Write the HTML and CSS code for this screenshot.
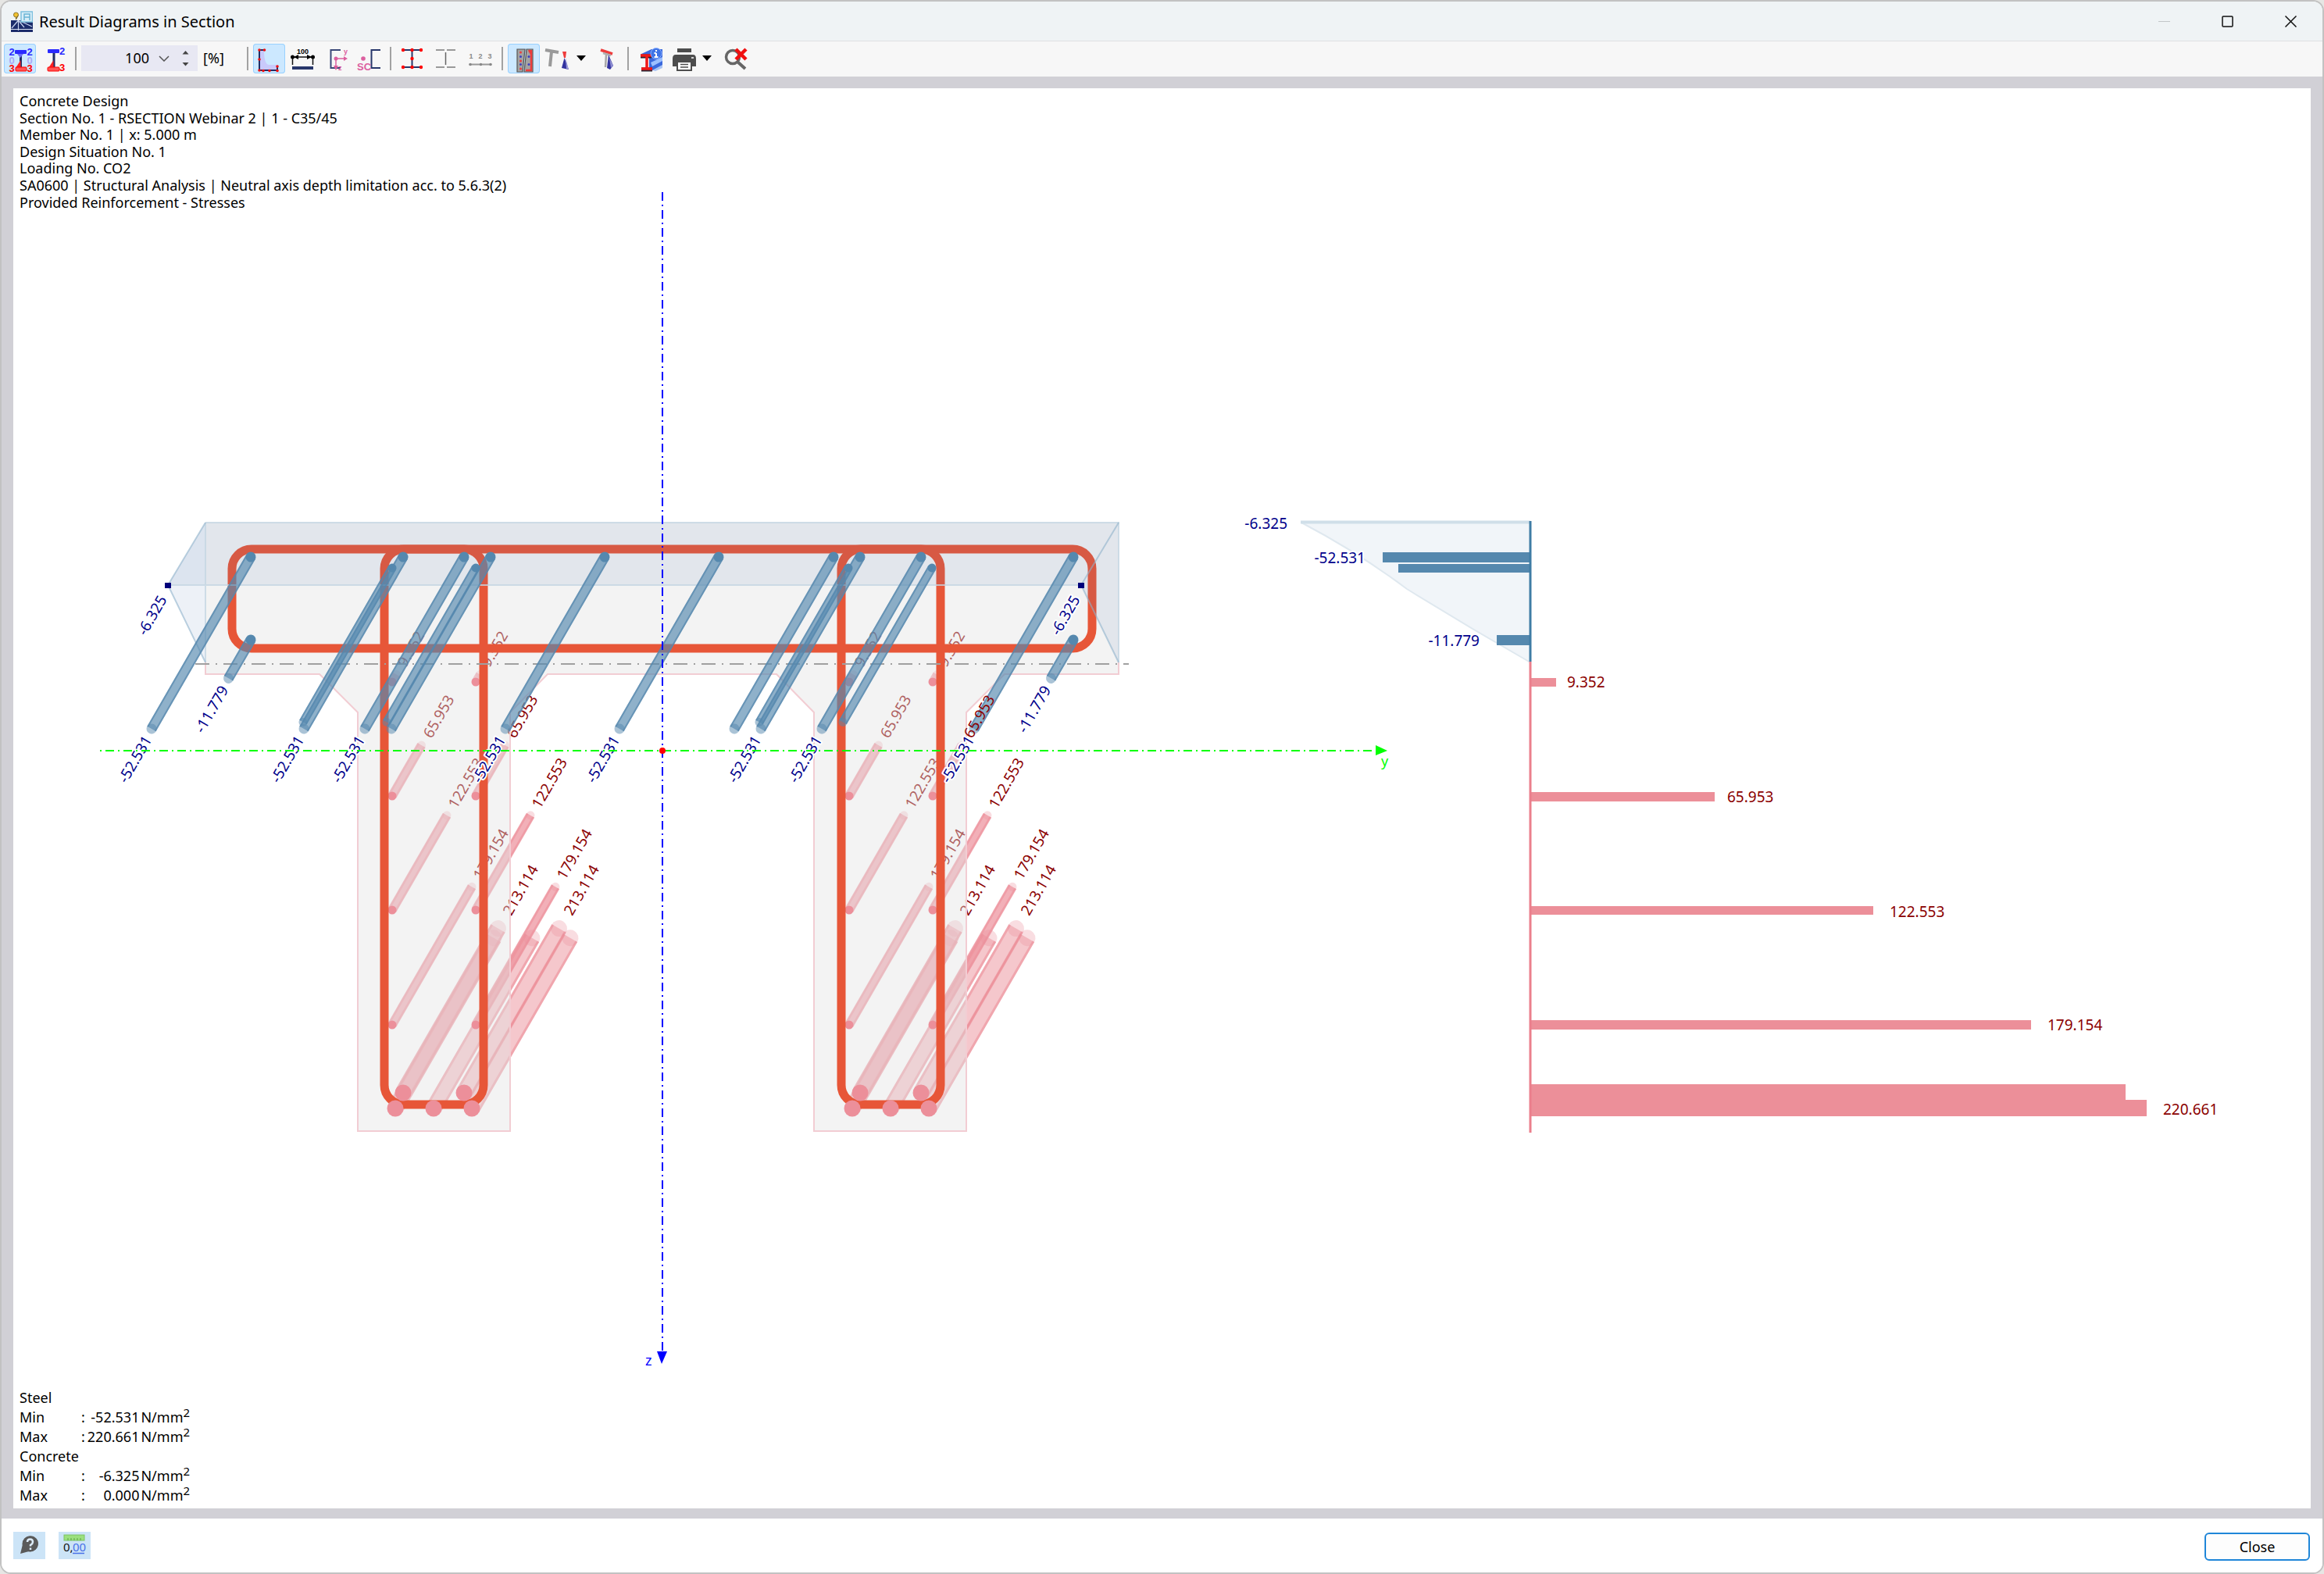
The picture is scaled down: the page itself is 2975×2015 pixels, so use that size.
FILE: index.html
```html
<!DOCTYPE html>
<html lang="en">
<head>
<meta charset="utf-8">
<title>Result Diagrams in Section</title>
<link rel="stylesheet" href="styles.css">
</head>
<body>
<div class="window">
  <header class="titlebar">
    <svg class="app-icon" viewBox="0 0 28 27" aria-hidden="true">
      <rect y="12" width="28" height="15" fill="#1b2c6b"/>
      <path d="M0 23.500H28" stroke="#dfe6f5" stroke-width="1"/>
      <path d="M9.500 12V25M9.500 12L1 22M9.500 12L17 21M12 13L27 20" stroke="#c9d5ee" stroke-width="1.200" fill="none"/>
      <rect x="13" y="1" width="14.500" height="13" fill="#d9eef8" stroke="#7cc0de" stroke-width="1.500"/>
      <path d="M17 12V4H24V12M17 8H24" stroke="#6ab4d5" stroke-width="1.500" fill="none"/>
      <circle cx="6.500" cy="5" r="3" fill="#f3c22d" stroke="#8a7430" stroke-width="1"/>
      <path d="M6.500 8V11M9 6L7 10" stroke="#8a7430" stroke-width="1.200"/>
    </svg>
    <h1 class="title">Result Diagrams in Section</h1>
    <div class="window-controls">
      <button class="ctl" type="button" aria-label="Minimize" disabled><svg viewBox="0 0 15 15"><path d="M0 7.500H15" stroke="#c3c6c8"/></svg></button>
      <button class="ctl" type="button" aria-label="Maximize"><svg viewBox="0 0 15 15"><rect x="1" y="1" width="13" height="13" rx="1" fill="none" stroke="#111" stroke-width="1.500"/></svg></button>
      <button class="ctl" type="button" aria-label="Close window"><svg viewBox="0 0 15 15"><path d="M0.500 0.500L14.500 14.500M14.500 0.500L0.500 14.500" stroke="#111" stroke-width="1.500"/></svg></button>
    </div>
  </header>

  <div class="toolbar" role="toolbar" aria-label="Diagram tools">
    <button class="tool active" type="button" aria-label="Two-sided values">
      <svg viewBox="0 0 41 38">
        <path d="M21.500 12V32" stroke="#1f2e66" stroke-width="3"/>
        <rect x="14" y="8" width="15" height="5" rx="1" fill="#2a2aff"/>
        <path d="M17 13L21 18L25 13Z" fill="#6d6df5"/>
        <path d="M15 31L21.500 21V31Z" fill="#f22"/>
        <rect x="15" y="30" width="14" height="5" rx="1" fill="#f55" stroke="#f00"/>
        <g class="ico-text" text-anchor="middle"><text x="10" y="15" fill="#2a2aff">2</text><text x="33" y="15" fill="#2a2aff">2</text><text x="10" y="26" fill="#a9a9f5">0</text><text x="33" y="26" fill="#a9a9f5">0</text><text x="10" y="36" fill="#f00">3</text><text x="33" y="36" fill="#f00">3</text></g>
      </svg>
    </button>
    <button class="tool" type="button" aria-label="One-sided values">
      <svg viewBox="0 0 41 38">
        <path d="M20 10V32" stroke="#1f2e66" stroke-width="3"/>
        <rect x="12" y="7" width="15" height="5" rx="1" fill="#2a2aff"/>
        <path d="M13 31L19.500 21V31Z" fill="#f22"/>
        <rect x="12" y="30" width="15" height="5" rx="1" fill="#f55" stroke="#f00"/>
        <g class="ico-text"><text x="27" y="14" fill="#2a2aff">2</text><text x="27" y="35" fill="#f00">3</text></g>
      </svg>
    </button>
    <span class="sep"></span>
    <div class="zoom">
      <input class="zoom-input" id="zoom" type="text" value="100" aria-describedby="zoom-unit">
      <button class="zoom-drop" type="button" aria-label="Zoom presets"><svg viewBox="0 0 14 8"><path d="M1 1L7 7L13 1" fill="none" stroke="#555" stroke-width="1.500"/></svg></button>
      <button class="zoom-step" type="button" aria-label="Step zoom"><svg viewBox="0 0 9 20"><path d="M0.500 4.500L4.500 0L8.500 4.500ZM0.500 15L4.500 19.500L8.500 15Z" fill="#444"/></svg></button>
    </div>
    <label class="unit" id="zoom-unit" for="zoom">[%]</label>
    <span class="sep"></span>
    <button class="tool active" type="button" aria-label="Section contour">
      <svg viewBox="0 0 41 38">
        <path d="M8 8H14Q14 26 20 27H32V34H8Z" fill="#c9c9fb"/>
        <path d="M8 8V34H31V28M8 8H14" fill="none" stroke="#1f2e66" stroke-width="2"/>
        <g fill="#e11"><circle cx="8" cy="8" r="1.800"/><circle cx="14.500" cy="8" r="1.800"/><circle cx="8" cy="20" r="1.800"/><circle cx="8" cy="34" r="1.800"/><circle cx="13" cy="34.500" r="1.800"/><circle cx="21" cy="34.500" r="1.800"/><circle cx="31" cy="34.500" r="1.800"/><circle cx="31" cy="29" r="1.800"/></g>
      </svg>
    </button>
    <button class="tool" type="button" aria-label="Dimensions">
      <svg viewBox="0 0 41 38">
        <rect x="6" y="29" width="27" height="4" fill="#27376b"/>
        <path d="M6.500 17V27M32.500 17V27M6.500 17H32.500" stroke="#111" stroke-width="1.500"/>
        <circle cx="6.500" cy="17" r="2.500"/><circle cx="32.500" cy="17" r="2.500"/>
        <path d="M8 17L14 14V20ZM31 17L25 14V20Z"/>
        <text class="ico-mini" x="19.500" y="13" text-anchor="middle">100</text>
      </svg>
    </button>
    <button class="tool" type="button" aria-label="Principal axes">
      <svg viewBox="0 0 41 38">
        <path d="M24 8H11.500V31H24" fill="none" stroke="#3a4878" stroke-width="2"/>
        <path d="M18 19H30M18 19V31" stroke="#dc5f9f" stroke-width="1.500"/>
        <circle cx="18" cy="19" r="2.500" fill="#dc5f9f"/><path d="M28 16L33 19L28 22ZM15 28L18 34L21 28Z" fill="#dc5f9f"/>
        <g class="ico-mini" fill="#dc5f9f"><text x="28" y="13">y</text><text x="21" y="34">z</text></g>
      </svg>
    </button>
    <button class="tool narrow" type="button" aria-label="Shear center">
      <svg viewBox="0 0 37 38">
        <path d="M31 8H19.500V31H31" fill="none" stroke="#27376b" stroke-width="2"/>
        <circle cx="9" cy="19" r="2.800" fill="#dc5f9f"/>
        <text class="ico-text" x="1" y="34" fill="#dc5f9f">SC</text>
      </svg>
    </button>
    <span class="sep"></span>
    <button class="tool" type="button" aria-label="Stress points">
      <svg viewBox="0 0 41 38">
        <path d="M9 8H33M9 30H33M20.500 8V30" stroke="#27376b" stroke-width="2"/>
        <g fill="#f00"><circle cx="9" cy="8" r="2.200"/><circle cx="20.500" cy="8" r="2.200"/><circle cx="32" cy="8" r="2.200"/><circle cx="20.500" cy="19" r="2.200"/><circle cx="9" cy="30" r="2.200"/><circle cx="20.500" cy="30" r="2.200"/><circle cx="32" cy="30" r="2.200"/></g>
      </svg>
    </button>
    <button class="tool" type="button" aria-label="Elements">
      <svg viewBox="0 0 41 38"><path d="M7 8H18M21 8H32M7 30H18M21 30H32" stroke="#999" stroke-width="1.800"/><path d="M19.500 11V27" stroke="#666" stroke-width="1.500"/></svg>
    </button>
    <button class="tool" type="button" aria-label="Numbering">
      <svg viewBox="0 0 41 38"><path d="M7 26.500H34" stroke="#999" stroke-width="1.800"/><g fill="#888"><circle cx="7" cy="26.500" r="1.800"/><circle cx="20.500" cy="26.500" r="1.800"/><circle cx="33" cy="26.500" r="1.800"/></g><g class="ico-mini" fill="#888" text-anchor="middle"><text x="8" y="19">1</text><text x="20" y="19">2</text><text x="32" y="19">3</text></g></svg>
    </button>
    <span class="sep"></span>
    <button class="tool active" type="button" aria-label="Reinforcement">
      <svg viewBox="0 0 41 38">
        <path d="M12 7H22L19 36H12ZM24 7H32V36H21Z" fill="#a3a3a3" stroke="#555" stroke-width="1.200"/>
        <path d="M30 8V34H23M27 8L30 13" fill="none" stroke="#ee3c3c" stroke-width="2.500"/>
        <g fill="#ee3c3c"><circle cx="16.500" cy="11" r="1.500"/><circle cx="16.500" cy="22" r="1.500"/><circle cx="16.500" cy="32" r="1.500"/></g>
        <g fill="#4040c0"><circle cx="16.500" cy="16.500" r="1.500"/><circle cx="16.500" cy="26.500" r="1.500"/><circle cx="27" cy="16.500" r="1.500"/><circle cx="27" cy="26.500" r="1.500"/></g>
      </svg>
    </button>
    <div class="split">
      <button class="tool" type="button" aria-label="Stress on section">
        <svg viewBox="0 0 41 38">
          <path d="M4 8L21 11M12 10L10 29" stroke="#9a9a9a" stroke-width="4" fill="none"/>
          <path d="M26 10H31L30 18H28Z" fill="#ee3c3c"/><path d="M28.500 18L25 31L34 33Z" fill="#3434a0"/><path d="M30 18L34 33L31 32Z" fill="#9b9bd8"/>
        </svg>
      </button>
      <button class="drop" type="button" aria-label="Stress options"><svg viewBox="0 0 12 7"><path d="M0 0H12L6 7Z"/></svg></button>
    </div>
    <button class="tool" type="button" aria-label="Result on section">
      <svg viewBox="0 0 41 38">
        <path d="M13 8L28 13" stroke="#ee3c3c" stroke-width="3.500"/><path d="M16 12L26 15" stroke="#b0b0b0" stroke-width="2.500"/>
        <path d="M20 14L19 30" stroke="#a8a8a8" stroke-width="2.500"/>
        <path d="M23 14L21 31L25 33L29 28Z" fill="#3434a0"/><path d="M24 18L29 28L26 31Z" fill="#8f8fd2"/>
      </svg>
    </button>
    <span class="sep"></span>
    <button class="tool" type="button" aria-label="Section details">
      <svg viewBox="0 0 41 38">
        <path d="M10 13L23 7H37V28L25 34H20V18Z" fill="#3b69dd"/><path d="M22 24L37 17V22L24 29Z" fill="#9cc0ff"/><path d="M24 34L37 27V31L28 35Z" fill="#a9c4f5"/>
        <path d="M9 16H23M10 33H24" stroke="#2b2330" stroke-width="5"/><path d="M9 15H23M17 15V32M10 32H24" stroke="#f01818" stroke-width="3.500"/>
        <circle cx="29" cy="12.500" r="7" fill="#3f74e6" stroke="#8fb2ff"/>
        <path d="M29 12V17M26.500 12H29M26.500 17H31.500M29 8V10" stroke="#fff" stroke-width="2"/>
      </svg>
    </button>
    <div class="split">
      <button class="tool" type="button" aria-label="Print">
        <svg viewBox="0 0 41 38">
          <path d="M12 6H30V11H12ZM6 19Q6 14 10 14H32Q36 14 36 19V29H31V24H11V29H6Z" fill="#4d4d4d"/>
          <rect x="12" y="23" width="18" height="11" fill="#fff" stroke="#4d4d4d" stroke-width="2"/><path d="M16 26.500H26M16 30H26" stroke="#4d4d4d" stroke-width="1.500"/><path d="M30 18H33" stroke="#fff" stroke-width="1.500"/>
        </svg>
      </button>
      <button class="drop" type="button" aria-label="Print options"><svg viewBox="0 0 12 7"><path d="M0 0H12L6 7Z"/></svg></button>
    </div>
    <button class="tool" type="button" aria-label="Reset view">
      <svg viewBox="0 0 41 38">
        <circle cx="21" cy="17" r="8.500" fill="none" stroke="#666" stroke-width="3.500"/><path d="M27 23L37 32" stroke="#666" stroke-width="4"/>
        <path d="M25 7L38 20M38 7L25 20" stroke="#f01010" stroke-width="4.500"/>
      </svg>
    </button>
  </div>

  <main class="frame">
    <div class="canvas">
      <svg class="diagram" viewBox="17 113 2941 1818" role="img" aria-label="Stress diagram of the section">
        <defs>
          <g id="b-main"><rect class="b-body" x="0" y="-6.500" width="254" height="13"/><path class="b-edge" d="M0 -5.500H254M0 5.500H254"/><circle class="b-tail" cx="254" r="6.500"/><circle class="b-head" r="6.500"/></g>
          <g id="b-small"><rect class="b-body" x="0" y="-5.500" width="228" height="11"/><path class="b-edge" d="M0 -4.500H228M0 4.500H228"/><circle class="b-tail" cx="228" r="5.500"/><circle class="b-head" r="5.500"/></g>
          <g id="b-short"><rect class="b-body" x="0" y="-6.500" width="57" height="13"/><path class="b-edge" d="M0 -5.500H57M0 5.500H57"/><circle class="b-tail" cx="57" r="6.500"/><circle class="b-head" r="6.500"/></g>
          <g id="p-9"><rect class="p-body" y="-5.500" width="11" height="11"/><circle class="p-tail" cx="11" r="5.500"/></g>
          <g id="p-66"><rect class="p-body" y="-5.500" width="75" height="11"/><path class="p-edge" d="M0 -4.500H75M0 4.500H75"/><circle class="p-tail" cx="75" r="5.500"/></g>
          <g id="p-123"><rect class="p-body" y="-5.500" width="140" height="11"/><path class="p-edge" d="M0 -4.500H140M0 4.500H140"/><circle class="p-tail" cx="140" r="5.500"/></g>
          <g id="p-179"><rect class="p-body" y="-5.500" width="204" height="11"/><path class="p-edge" d="M0 -4.500H204M0 4.500H204"/><circle class="p-tail" cx="204" r="5.500"/></g>
          <g id="p-213"><rect class="p-wide" y="-10.500" width="243" height="21"/><path class="p-edge" d="M0 -9H243M0 9H243"/><circle class="p-tail" cx="243" r="10.500"/></g>
          <g id="p-221"><rect class="p-wide" y="-10.500" width="252" height="21"/><path class="p-edge" d="M0 -9H252M0 9H252"/><circle class="p-tail" cx="252" r="10.500"/></g>
          <g id="tension">
            <use href="#p-9" transform="translate(502 873) rotate(-60)"/><use href="#p-9" transform="translate(609 873) rotate(-60)"/>
            <use href="#p-66" transform="translate(502 1019) rotate(-60)"/><use href="#p-66" transform="translate(609 1019) rotate(-60)"/>
            <use href="#p-123" transform="translate(502 1165) rotate(-60)"/><use href="#p-123" transform="translate(609 1165) rotate(-60)"/>
            <use href="#p-179" transform="translate(502 1312) rotate(-60)"/><use href="#p-179" transform="translate(609 1312) rotate(-60)"/>
            <use href="#p-213" transform="translate(516 1399) rotate(-60)"/><use href="#p-213" transform="translate(594 1399) rotate(-60)"/>
            <use href="#p-221" transform="translate(506 1419) rotate(-60)"/><use href="#p-221" transform="translate(555 1419) rotate(-60)"/><use href="#p-221" transform="translate(604 1419) rotate(-60)"/>
          </g>
          <g id="small-heads" class="p-head"><circle cx="502" cy="873" r="5.500"/><circle cx="609" cy="873" r="5.500"/><circle cx="502" cy="1019" r="5.500"/><circle cx="609" cy="1019" r="5.500"/><circle cx="502" cy="1165" r="5.500"/><circle cx="609" cy="1165" r="5.500"/><circle cx="502" cy="1312" r="5.500"/><circle cx="609" cy="1312" r="5.500"/></g>
          <g id="big-heads" class="p-head"><circle cx="516" cy="1399" r="10.500"/><circle cx="594" cy="1399" r="10.500"/><circle cx="506" cy="1419" r="10.500"/><circle cx="555" cy="1419" r="10.500"/><circle cx="604" cy="1419" r="10.500"/></g>
          <rect id="web-stirrup" class="stirrup" x="492" y="703" width="127" height="711" rx="25"/>
        </defs>

        <!-- tension bars and their values, behind the concrete -->
        <use href="#tension"/>
        <use href="#tension" x="585"/>
        <g class="label max">
          <text transform="translate(507 863) rotate(-60)" x="13" y="7">9.352</text>
          <text transform="translate(614 863) rotate(-60)" x="13" y="7">9.352</text>
          <text transform="translate(540 954) rotate(-60)" x="13" y="7">65.953</text>
          <text transform="translate(647 954) rotate(-60)" x="13" y="7">65.953</text>
          <text transform="translate(572 1044) rotate(-60)" x="13" y="7">122.553</text>
          <text transform="translate(679 1044) rotate(-60)" x="13" y="7">122.553</text>
          <text transform="translate(604 1135) rotate(-60)" x="13" y="7">179.154</text>
          <text transform="translate(711 1135) rotate(-60)" x="13" y="7">179.154</text>
          <text transform="translate(638 1188) rotate(-60)" x="21" y="7">213.114</text>
          <text transform="translate(716 1188) rotate(-60)" x="21" y="7">213.114</text>
          <text transform="translate(1092 863) rotate(-60)" x="13" y="7">9.352</text>
          <text transform="translate(1199 863) rotate(-60)" x="13" y="7">9.352</text>
          <text transform="translate(1125 954) rotate(-60)" x="13" y="7">65.953</text>
          <text transform="translate(1157 1044) rotate(-60)" x="13" y="7">122.553</text>
          <text transform="translate(1264 1044) rotate(-60)" x="13" y="7">122.553</text>
          <text transform="translate(1189 1135) rotate(-60)" x="13" y="7">179.154</text>
          <text transform="translate(1296 1135) rotate(-60)" x="13" y="7">179.154</text>
          <text transform="translate(1223 1188) rotate(-60)" x="21" y="7">213.114</text>
          <text transform="translate(1301 1188) rotate(-60)" x="21" y="7">213.114</text>
        </g>

        <!-- concrete outline -->
        <path class="concrete" d="M263 669H1432V863H1286L1237 912V1448H1042V912L994 863H701L653 912V1448H458V912L409 863H263Z"/>
        <path class="outline" d="M263 848V863H409L458 912V1448H653V912L701 863H994L1042 912V1448H1237V912L1286 863H1432V848"/>

        <use href="#small-heads"/>
        <use href="#small-heads" x="585"/>

        <rect class="stirrup" x="297" y="703" width="1101" height="127" rx="25"/>
        <use href="#web-stirrup"/>
        <use href="#web-stirrup" x="585"/>
        <use href="#big-heads"/>
        <use href="#big-heads" x="585"/>

        <!-- concrete compression -->
        <path class="wedge" d="M263 669H1432V848L1384 749H263Z"/>
        <path class="wedge" d="M215 749L263 669V749Z"/>
        <path class="wedge" d="M215 749L263 669V848Z"/>
        <path class="wedge-line" d="M263 669H1432V848M263 669V848M215 749H1384"/>
        <path class="wedge-side" d="M263 669L215 749L263 848M1432 669L1384 749L1432 848"/>

        <path class="neutral" d="M250 850H1445"/>

        <!-- compression bars -->
        <use href="#b-small" transform="translate(502 727) rotate(120)"/>
        <use href="#b-small" transform="translate(609 727) rotate(120)"/>
        <use href="#b-small" transform="translate(1086 727) rotate(120)"/>
        <use href="#b-small" transform="translate(1193 727) rotate(120)"/>
        <use href="#b-main" transform="translate(321 713) rotate(120)"/>
        <use href="#b-main" transform="translate(516 713) rotate(120)"/>
        <use href="#b-main" transform="translate(594 713) rotate(120)"/>
        <use href="#b-main" transform="translate(628 713) rotate(120)"/>
        <use href="#b-main" transform="translate(774 713) rotate(120)"/>
        <use href="#b-main" transform="translate(920 713) rotate(120)"/>
        <use href="#b-main" transform="translate(1067 713) rotate(120)"/>
        <use href="#b-main" transform="translate(1101 713) rotate(120)"/>
        <use href="#b-main" transform="translate(1179 713) rotate(120)"/>
        <use href="#b-main" transform="translate(1374 713) rotate(120)"/>
        <use href="#b-short" transform="translate(321 819) rotate(120)"/>
        <use href="#b-short" transform="translate(1374 819) rotate(120)"/>
        <g class="label max"><text transform="translate(1232 954) rotate(-60)" x="13" y="7">65.953</text></g>
        <g class="label min halo" text-anchor="end">
          <text transform="translate(216 750) rotate(-60)" x="-16" y="7">-6.325</text>
          <text transform="translate(1385 750) rotate(-60)" x="-16" y="7">-6.325</text>
          <text transform="translate(293 869) rotate(-60)" x="-12" y="7">-11.779</text>
          <text transform="translate(1346 869) rotate(-60)" x="-12" y="7">-11.779</text>
          <text transform="translate(195 933) rotate(-60)" x="-12" y="7">-52.531</text>
          <text transform="translate(390 933) rotate(-60)" x="-12" y="7">-52.531</text>
          <text transform="translate(468 933) rotate(-60)" x="-12" y="7">-52.531</text>
          <text transform="translate(648 933) rotate(-60)" x="-12" y="7">-52.531</text>
          <text transform="translate(794 933) rotate(-60)" x="-12" y="7">-52.531</text>
          <text transform="translate(975 933) rotate(-60)" x="-12" y="7">-52.531</text>
          <text transform="translate(1053 933) rotate(-60)" x="-12" y="7">-52.531</text>
          <text transform="translate(1248 933) rotate(-60)" x="-12" y="7">-52.531</text>
        </g>
        <path d="M211 746H219V753H211ZM1380 746H1388V753H1380Z" fill="#00007a"/>

        <!-- section axes -->
        <path class="axis-y" d="M125 961H1761"/>
        <path class="axis-z" d="M848 246V1731"/>
        <path d="M1761 954V967L1776 961Z" fill="#0f0"/>
        <path d="M841 1730H854L847 1746Z" fill="#00f"/>
        <circle cx="848" cy="961" r="4" fill="#f00"/>
        <text class="axis-name" x="1768" y="981" fill="#0f0">y</text>
        <text class="axis-name" x="826" y="1748" fill="#00f">z</text>

        <!-- stress over the section height -->
        <path d="M1666 669H1959V848Q1880 803 1801 754Q1740 708 1666 669Z" fill="#f1f5f9" stroke="#dfe8ef" stroke-width="2"/>
        <path d="M1665 668.500H1959" stroke="#d0dfe9" stroke-width="4"/>
        <path d="M1770 707H1959V720H1770ZM1790 722H1959V733H1790ZM1916 813H1959V826H1916Z" fill="#5588ae"/>
        <path d="M1959 868H1992V879H1959ZM1959 1014H2195V1026H1959ZM1959 1160H2398V1171H1959ZM1959 1306H2600V1318H1959ZM1959 1388H2721V1408H2748V1429H1959Z" fill="#ec8f99"/>
        <path d="M1959 667V847" stroke="#3f7ca5" stroke-width="3"/>
        <path d="M1959 847V1450" stroke="#eb7f8c" stroke-width="3"/>
        <g class="label min halo" text-anchor="end">
          <text x="1648" y="677">-6.325</text><text x="1748" y="721">-52.531</text><text x="1894" y="827">-11.779</text>
        </g>
        <g class="label max">
          <text x="2006" y="880">9.352</text><text x="2211" y="1027">65.953</text><text x="2419" y="1174">122.553</text><text x="2621" y="1319">179.154</text><text x="2769" y="1427">220.661</text>
        </g>
      </svg>

      <div class="info">
        <p>Concrete Design</p>
        <p>Section No. 1 - RSECTION Webinar 2 | 1 - C35/45</p>
        <p>Member No. 1 | x: 5.000 m</p>
        <p>Design Situation No. 1</p>
        <p>Loading No. CO2</p>
        <p>SA0600 | Structural Analysis | Neutral axis depth limitation acc. to 5.6.3(2)</p>
        <p>Provided Reinforcement - Stresses</p>
      </div>

      <table class="extremes">
        <tbody>
          <tr><th colspan="4" scope="rowgroup">Steel</th></tr>
          <tr><th scope="row">Min</th><td>:</td><td class="num">-52.531</td><td class="mm">N/mm<sup>2</sup></td></tr>
          <tr><th scope="row">Max</th><td>:</td><td class="num">220.661</td><td class="mm">N/mm<sup>2</sup></td></tr>
        </tbody>
        <tbody>
          <tr><th colspan="4" scope="rowgroup">Concrete</th></tr>
          <tr><th scope="row">Min</th><td>:</td><td class="num">-6.325</td><td class="mm">N/mm<sup>2</sup></td></tr>
          <tr><th scope="row">Max</th><td>:</td><td class="num">0.000</td><td class="mm">N/mm<sup>2</sup></td></tr>
        </tbody>
      </table>
    </div>
  </main>

  <footer class="footer">
    <button class="foot-tool" type="button" aria-label="Help">
      <svg viewBox="0 0 41 35"><path d="M9 28L12 16A10 10 0 1 1 20 25Z" fill="#5a5a5a"/><circle cx="21.500" cy="15.500" r="10" fill="#5a5a5a"/><path d="M18 13Q18 9.500 21.500 9.500T25 13Q25 15 22 17V18.500M22 20.500V23" fill="none" stroke="#dcebf8" stroke-width="2.500"/></svg>
    </button>
    <button class="foot-tool" type="button" aria-label="Units and decimal places">
      <svg viewBox="0 0 41 35"><rect x="7" y="4" width="26" height="7" fill="#9be07e" stroke="#7cc463"/><path d="M12 11V8M16 11V8M20 11V8M24 11V8M28 11V8" stroke="#5da347"/><g class="ico-units"><text x="6" y="25" fill="#111">0,</text><text x="18" y="25" fill="#4870e8">00</text></g><path d="M18 27.500H33" stroke="#4870e8" stroke-width="1.500"/></svg>
    </button>
    <button class="close" type="button">Close</button>
  </footer>
</div>
</body>
</html>
```
FILE: styles.css
```css
* { box-sizing: border-box; }

body {
  margin: 0;
  background: #e6e6e4;
  color: #000;
  font: 18px/25px "Noto Sans", "Open Sans", sans-serif;
}

button {
  display: flex;
  align-items: center;
  justify-content: center;
  padding: 0;
  border: 0;
  background: none;
  color: inherit;
  font: inherit;
}

.window {
  display: flex;
  flex-direction: column;
  height: 100vh;
  border: 2px solid #c2c2c2;
  border-radius: 14px;
  background: #fff;
  overflow: hidden;
}

/* title bar */
.titlebar {
  display: flex;
  align-items: center;
  gap: 8px;
  height: 51px;
  padding-left: 12px;
  border-bottom: 1px solid #dfe1e3;
  background: #eff3f5;
}
.app-icon { width: 28px; height: 27px; }
.title { margin: 0; font-size: 20px; font-weight: 400; }
.window-controls { display: flex; margin-left: auto; }
.ctl { width: 81px; height: 50px; }
.ctl svg { width: 15px; height: 15px; }

/* toolbar */
.toolbar {
  display: flex;
  align-items: center;
  gap: 3px;
  height: 45px;
  padding: 0 3px 2px;
  background: #f7f7f7;
}
.toolbar > * { flex: none; }
.tool { width: 41px; height: 38px; border-radius: 4px; }
.tool svg { width: 100%; height: 100%; }
.tool.narrow { width: 37px; }
.tool.active { background: #cce8ff; box-shadow: inset 0 0 0 1px #99d1ff; }
.sep { width: 2px; height: 30px; margin: 0 3px; background: #a2a2a2; }
.split { display: flex; }
.drop { width: 18px; }
.drop svg { width: 12px; height: 7px; }
.zoom { display: flex; width: 149px; height: 33px; background: #e8e8f3; }
.zoom-input {
  flex: 1;
  min-width: 0;
  padding: 0;
  border: 0;
  background: none;
  text-align: right;
  font: inherit;
}
.zoom-drop { width: 38px; }
.zoom-drop svg { width: 14px; height: 8px; }
.zoom-step { width: 24px; padding-right: 8px; }
.zoom-step svg { width: 9px; height: 20px; flex: none; }
.unit { width: 54px; padding-left: 4px; }
.ico-text { font: bold 13px "Liberation Sans", sans-serif; }
.ico-mini { font: bold 9px "Liberation Sans", sans-serif; }
.ico-units { font: 15px "Noto Sans", sans-serif; }

/* drawing area */
.frame {
  display: flex;
  flex: 1;
  min-height: 0;
  padding: 15px 15px 13px;
  background: #d1d0d6;
}
.canvas {
  display: grid;
  grid-template: minmax(0, 1fr) / minmax(0, 1fr);
  flex: 1;
  background: #fff;
}
.canvas > * { grid-area: 1 / 1; }
.diagram { width: 100%; height: 100%; }
.info { padding: 6px 8px; line-height: 1.2; }
.info p { margin: 0; }
.extremes {
  align-self: end;
  justify-self: start;
  margin: 0 0 4px 8px;
  border-spacing: 0;
}
.extremes th, .extremes td { padding: 0; height: 25px; text-align: left; font-weight: 400; }
.extremes th[scope="row"] { width: 79px; }
.extremes .num { min-width: 68px; padding-left: 3px; text-align: right; }
.extremes .mm { padding-left: 2px; }
.extremes sup { font-size: 15px; line-height: 0; }

.footer {
  display: flex;
  align-items: center;
  gap: 17px;
  height: 69px;
  padding: 0 16px 1px 15px;
  background: #fff;
}
.foot-tool { width: 41px; height: 35px; background: #cce4f7; }
.foot-tool svg { width: 41px; height: 35px; }
.close {
  width: 135px;
  height: 36px;
  margin: 4px 0 0 auto;
  border: 2px solid #1f86d8;
  border-radius: 6px;
  background: #fdfdfd;
}

/* drawing */
.label { font-size: 19px; }
.label.min { fill: #00008b; }
.label.max { fill: #8b0000; }
.label.halo { paint-order: stroke; stroke: #fff; stroke-width: 4px; stroke-linejoin: round; }
.axis-name { font-size: 18px; }
.concrete { fill: #e2e2e2; fill-opacity: 0.42; }
.outline { fill: none; stroke: #f2cdd3; stroke-width: 2; }
.stirrup { fill: none; stroke: #e75638; stroke-width: 11; }
.wedge { fill: #4a78ae; fill-opacity: 0.1; }
.wedge-line { fill: none; stroke: #c4d6e2; stroke-width: 2; stroke-opacity: 0.8; }
.wedge-side { fill: none; stroke: #8fb3cc; stroke-width: 2; stroke-opacity: 0.6; }
.neutral { fill: none; stroke: #a0a0a0; stroke-width: 2; stroke-dasharray: 18 8 2 8; }
.b-body { fill: #5588ae; fill-opacity: 0.66; }
.b-edge { fill: none; stroke: #5588ae; stroke-width: 2; stroke-opacity: 0.7; }
.b-tail { fill: #5588ae; fill-opacity: 0.5; }
.b-head { fill: #5588ae; }
.p-body { fill: #ec8f9a; fill-opacity: 0.7; }
.p-wide { fill: #ec8f9a; fill-opacity: 0.5; }
.p-edge { fill: none; stroke: #ec8f9a; stroke-width: 3; stroke-opacity: 0.6; }
.p-tail { fill: #ec8f9a; fill-opacity: 0.3; }
.p-head { fill: #ec8f9a; }
.axis-y { stroke: #0f0; stroke-width: 2; stroke-dasharray: 11 5 2 5; stroke-dashoffset: 13; }
.axis-z { stroke: #00f; stroke-width: 2; stroke-dasharray: 11 5 2 5; }
```
